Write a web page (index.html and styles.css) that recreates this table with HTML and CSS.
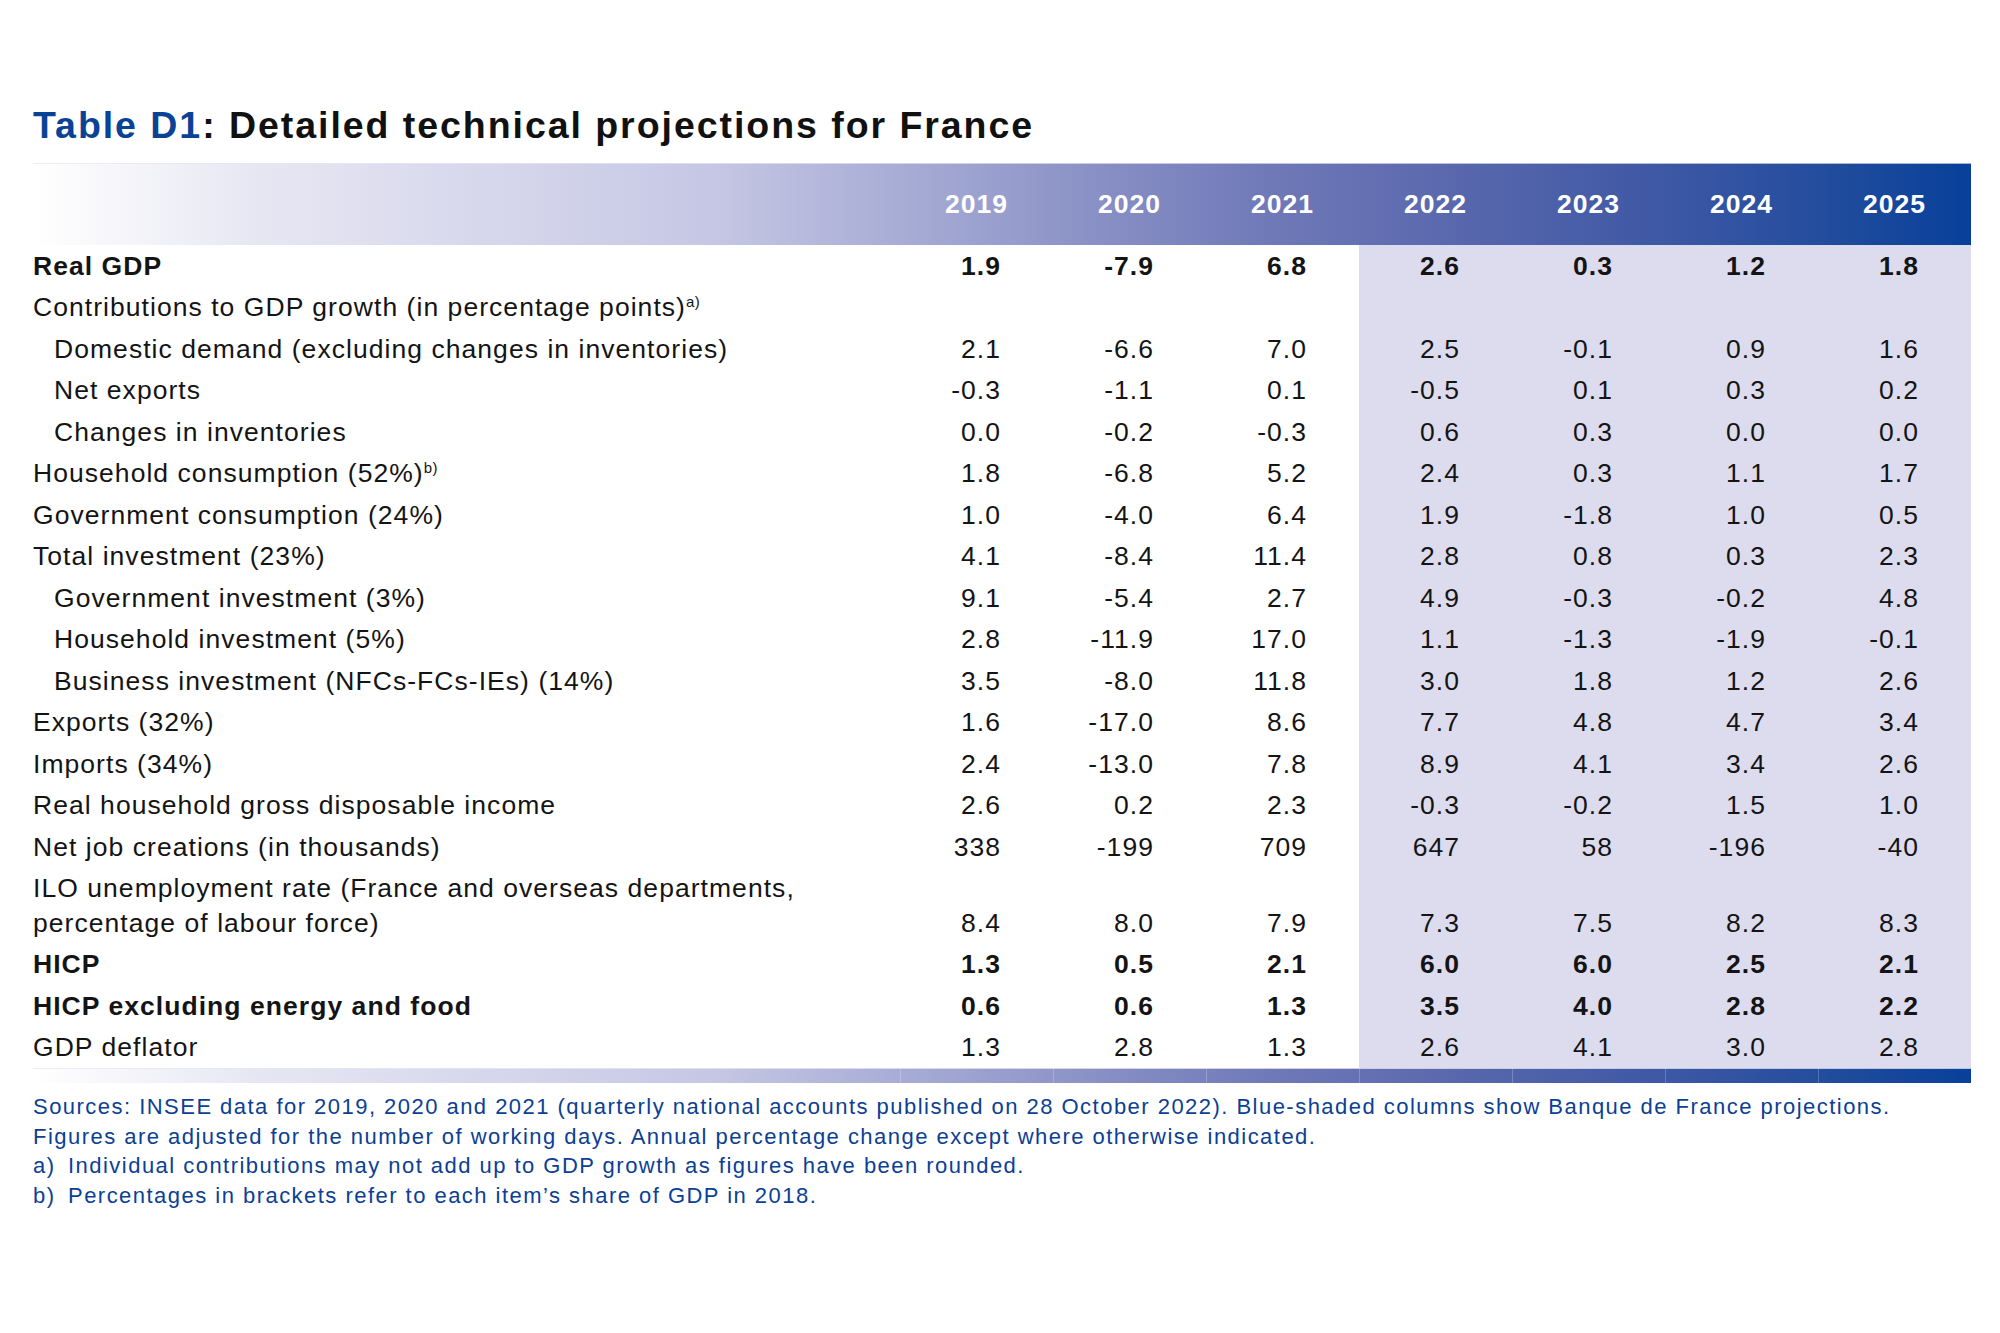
FILE: index.html
```html
<!DOCTYPE html>
<html lang="en">
<head>
<meta charset="utf-8">
<title>Table D1: Detailed technical projections for France</title>
<link rel="stylesheet" href="styles.css">
</head>
<body>
<div class="sheet">
  <h1 class="title"><span class="title-key">Table D1</span>: Detailed technical projections for France</h1>

  <div class="table">
    <div class="row head">
      <div class="cell label"></div>
      <div class="cell year">2019</div>
      <div class="cell year">2020</div>
      <div class="cell year">2021</div>
      <div class="cell year">2022</div>
      <div class="cell year">2023</div>
      <div class="cell year">2024</div>
      <div class="cell year">2025</div>
    </div>

    <div class="row bold">
      <div class="cell label">Real GDP</div>
      <div class="cell num">1.9</div><div class="cell num">-7.9</div><div class="cell num">6.8</div>
      <div class="cell num proj">2.6</div><div class="cell num proj">0.3</div><div class="cell num proj">1.2</div><div class="cell num proj">1.8</div>
    </div>
    <div class="row">
      <div class="cell label">Contributions to GDP growth (in percentage points)<sup class="note">a)</sup></div>
      <div class="cell num"></div><div class="cell num"></div><div class="cell num"></div>
      <div class="cell num proj"></div><div class="cell num proj"></div><div class="cell num proj"></div><div class="cell num proj"></div>
    </div>
    <div class="row">
      <div class="cell label sub">Domestic demand (excluding changes in inventories)</div>
      <div class="cell num">2.1</div><div class="cell num">-6.6</div><div class="cell num">7.0</div>
      <div class="cell num proj">2.5</div><div class="cell num proj">-0.1</div><div class="cell num proj">0.9</div><div class="cell num proj">1.6</div>
    </div>
    <div class="row">
      <div class="cell label sub">Net exports</div>
      <div class="cell num">-0.3</div><div class="cell num">-1.1</div><div class="cell num">0.1</div>
      <div class="cell num proj">-0.5</div><div class="cell num proj">0.1</div><div class="cell num proj">0.3</div><div class="cell num proj">0.2</div>
    </div>
    <div class="row">
      <div class="cell label sub">Changes in inventories</div>
      <div class="cell num">0.0</div><div class="cell num">-0.2</div><div class="cell num">-0.3</div>
      <div class="cell num proj">0.6</div><div class="cell num proj">0.3</div><div class="cell num proj">0.0</div><div class="cell num proj">0.0</div>
    </div>
    <div class="row">
      <div class="cell label">Household consumption (52%)<sup class="note">b)</sup></div>
      <div class="cell num">1.8</div><div class="cell num">-6.8</div><div class="cell num">5.2</div>
      <div class="cell num proj">2.4</div><div class="cell num proj">0.3</div><div class="cell num proj">1.1</div><div class="cell num proj">1.7</div>
    </div>
    <div class="row">
      <div class="cell label">Government consumption (24%)</div>
      <div class="cell num">1.0</div><div class="cell num">-4.0</div><div class="cell num">6.4</div>
      <div class="cell num proj">1.9</div><div class="cell num proj">-1.8</div><div class="cell num proj">1.0</div><div class="cell num proj">0.5</div>
    </div>
    <div class="row">
      <div class="cell label">Total investment (23%)</div>
      <div class="cell num">4.1</div><div class="cell num">-8.4</div><div class="cell num">11.4</div>
      <div class="cell num proj">2.8</div><div class="cell num proj">0.8</div><div class="cell num proj">0.3</div><div class="cell num proj">2.3</div>
    </div>
    <div class="row">
      <div class="cell label sub">Government investment (3%)</div>
      <div class="cell num">9.1</div><div class="cell num">-5.4</div><div class="cell num">2.7</div>
      <div class="cell num proj">4.9</div><div class="cell num proj">-0.3</div><div class="cell num proj">-0.2</div><div class="cell num proj">4.8</div>
    </div>
    <div class="row">
      <div class="cell label sub">Household investment (5%)</div>
      <div class="cell num">2.8</div><div class="cell num">-11.9</div><div class="cell num">17.0</div>
      <div class="cell num proj">1.1</div><div class="cell num proj">-1.3</div><div class="cell num proj">-1.9</div><div class="cell num proj">-0.1</div>
    </div>
    <div class="row">
      <div class="cell label sub">Business investment (NFCs-FCs-IEs) (14%)</div>
      <div class="cell num">3.5</div><div class="cell num">-8.0</div><div class="cell num">11.8</div>
      <div class="cell num proj">3.0</div><div class="cell num proj">1.8</div><div class="cell num proj">1.2</div><div class="cell num proj">2.6</div>
    </div>
    <div class="row">
      <div class="cell label">Exports (32%)</div>
      <div class="cell num">1.6</div><div class="cell num">-17.0</div><div class="cell num">8.6</div>
      <div class="cell num proj">7.7</div><div class="cell num proj">4.8</div><div class="cell num proj">4.7</div><div class="cell num proj">3.4</div>
    </div>
    <div class="row">
      <div class="cell label">Imports (34%)</div>
      <div class="cell num">2.4</div><div class="cell num">-13.0</div><div class="cell num">7.8</div>
      <div class="cell num proj">8.9</div><div class="cell num proj">4.1</div><div class="cell num proj">3.4</div><div class="cell num proj">2.6</div>
    </div>
    <div class="row">
      <div class="cell label">Real household gross disposable income</div>
      <div class="cell num">2.6</div><div class="cell num">0.2</div><div class="cell num">2.3</div>
      <div class="cell num proj">-0.3</div><div class="cell num proj">-0.2</div><div class="cell num proj">1.5</div><div class="cell num proj">1.0</div>
    </div>
    <div class="row">
      <div class="cell label">Net job creations (in thousands)</div>
      <div class="cell num">338</div><div class="cell num">-199</div><div class="cell num">709</div>
      <div class="cell num proj">647</div><div class="cell num proj">58</div><div class="cell num proj">-196</div><div class="cell num proj">-40</div>
    </div>
    <div class="row">
      <div class="cell label">ILO unemployment rate (France and overseas departments,<br>percentage of labour force)</div>
      <div class="cell num">8.4</div><div class="cell num">8.0</div><div class="cell num">7.9</div>
      <div class="cell num proj">7.3</div><div class="cell num proj">7.5</div><div class="cell num proj">8.2</div><div class="cell num proj">8.3</div>
    </div>
    <div class="row bold">
      <div class="cell label">HICP</div>
      <div class="cell num">1.3</div><div class="cell num">0.5</div><div class="cell num">2.1</div>
      <div class="cell num proj">6.0</div><div class="cell num proj">6.0</div><div class="cell num proj">2.5</div><div class="cell num proj">2.1</div>
    </div>
    <div class="row bold">
      <div class="cell label">HICP excluding energy and food</div>
      <div class="cell num">0.6</div><div class="cell num">0.6</div><div class="cell num">1.3</div>
      <div class="cell num proj">3.5</div><div class="cell num proj">4.0</div><div class="cell num proj">2.8</div><div class="cell num proj">2.2</div>
    </div>
    <div class="row">
      <div class="cell label">GDP deflator</div>
      <div class="cell num">1.3</div><div class="cell num">2.8</div><div class="cell num">1.3</div>
      <div class="cell num proj">2.6</div><div class="cell num proj">4.1</div><div class="cell num proj">3.0</div><div class="cell num proj">2.8</div>
    </div>

    <div class="row foot">
      <div class="cell"></div>
      <div class="cell tick"></div><div class="cell tick"></div><div class="cell tick"></div>
      <div class="cell tick"></div><div class="cell tick"></div><div class="cell tick"></div><div class="cell tick"></div>
    </div>
  </div>

  <div class="notes">
    <p class="line">Sources: INSEE data for 2019, 2020 and 2021 (quarterly national accounts published on 28 October 2022). Blue-shaded columns show Banque de France projections.</p>
    <p class="line">Figures are adjusted for the number of working days. Annual percentage change except where otherwise indicated.</p>
    <p class="line item"><span class="mark">a)</span><span>Individual contributions may not add up to GDP growth as figures have been rounded.</span></p>
    <p class="line item"><span class="mark">b)</span><span>Percentages in brackets refer to each item’s share of GDP in 2018.</span></p>
  </div>
</div>
</body>
</html>
```

FILE: styles.css
```css
html, body {
  margin: 0;
  padding: 0;
  background: #ffffff;
}

body {
  font-family: "Liberation Sans", Arial, Helvetica, sans-serif;
  color: #141414;
}

.sheet {
  padding: 103px 0 0 33px;
  width: 1938px;
}

.title {
  margin: 0;
  font-size: 37.5px;
  line-height: 44px;
  font-weight: 700;
  letter-spacing: 1.95px;
  color: #111111;
  white-space: nowrap;
}

.title-key {
  color: #0a4396;
}

.table {
  margin-top: 16px;
}

.row {
  display: grid;
  grid-template-columns: 867px repeat(7, 153px);
}

.head {
  height: 82px;
  background: linear-gradient(to right,
    #ffffff 0%,
    #e6e6f3 12%,
    #d6d6ec 24%,
    #c6c7e4 35%,
    #a7acd5 45%,
    #868dc3 56%,
    #6f79b8 64%,
    #5a68ad 73%,
    #3e58a5 84%,
    #214c9d 93%,
    #07409a 100%);
  box-shadow: inset 0 1px 0 rgba(230, 230, 242, 0.7);
}

.year {
  display: flex;
  align-items: center;
  justify-content: center;
  color: #ffffff;
  font-weight: 700;
  font-size: 28px;
  letter-spacing: 0;
}

.cell {
  font-size: 26.5px;
  line-height: 34.5px;
  letter-spacing: 1.05px;
}

.label {
  padding: 3.5px 0;
  white-space: nowrap;
}

.label.sub {
  padding-left: 21px;
}

.num {
  display: flex;
  align-items: flex-end;
  justify-content: flex-end;
  padding: 3.5px 52px 3.5px 0;
}

.proj {
  background: #dcdcee;
}

.bold .cell {
  font-weight: 700;
}

.note {
  font-size: 15px;
  line-height: 0;
  letter-spacing: 0.3px;
  vertical-align: 9px;
}

.foot {
  height: 15px;
  background: linear-gradient(to right,
    #ffffff 0%,
    #e6e6f3 12%,
    #d6d6ec 24%,
    #c6c7e4 35%,
    #a7acd5 45%,
    #868dc3 56%,
    #6f79b8 64%,
    #5a68ad 73%,
    #3e58a5 84%,
    #214c9d 93%,
    #07409a 100%);
  box-shadow: inset 0 1px 0 rgba(230, 230, 242, 0.8);
}

.foot .cell {
  line-height: 15px;
}

.tick {
  border-left: 1px solid rgba(255, 255, 255, 0.22);
}

.notes {
  margin-top: 9px;
  color: #0b4094;
  font-size: 22px;
  line-height: 29.7px;
  letter-spacing: 1.47px;
}

.line {
  margin: 0;
  white-space: nowrap;
}

.item {
  display: flex;
}

.mark {
  width: 35px;
  flex: none;
}
```
